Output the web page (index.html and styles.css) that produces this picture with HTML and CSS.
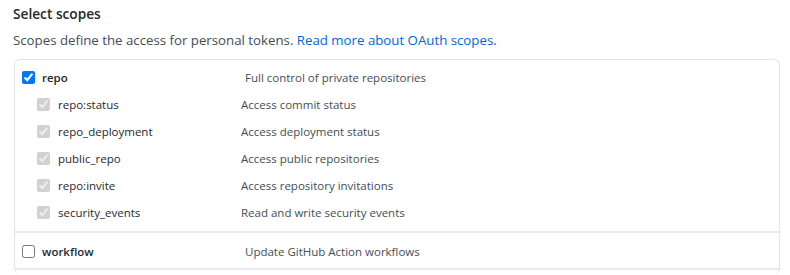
FILE: index.html
```html
<!DOCTYPE html>
<html>
<head>
<meta charset="utf-8">
<link rel="stylesheet" href="styles.css">
</head>
<body>
<div class="form-group">
  <h3 class="title">Select scopes</h3>
  <p class="note">Scopes define the access for personal tokens. <a href="#">Read more about OAuth scopes.</a></p>
  <div class="scopes">
    <div class="group">
      <div class="row main">
        <label class="name"><input type="checkbox" checked><span>repo</span></label>
        <span class="desc">Full control of private repositories</span>
      </div>
      <div class="row sub">
        <label class="name"><input type="checkbox" checked disabled><span>repo:status</span></label>
        <span class="desc">Access commit status</span>
      </div>
      <div class="row sub">
        <label class="name"><input type="checkbox" checked disabled><span>repo_deployment</span></label>
        <span class="desc">Access deployment status</span>
      </div>
      <div class="row sub">
        <label class="name"><input type="checkbox" checked disabled><span>public_repo</span></label>
        <span class="desc">Access public repositories</span>
      </div>
      <div class="row sub">
        <label class="name"><input type="checkbox" checked disabled><span>repo:invite</span></label>
        <span class="desc">Access repository invitations</span>
      </div>
      <div class="row sub">
        <label class="name"><input type="checkbox" checked disabled><span>security_events</span></label>
        <span class="desc">Read and write security events</span>
      </div>
    </div>
    <div class="group single">
      <div class="row main">
        <label class="name"><input type="checkbox"><span>workflow</span></label>
        <span class="desc">Update GitHub Action workflows</span>
      </div>
    </div>
    <div class="group rest"></div>
  </div>
</div>
</body>
</html>
```
FILE: styles.css
```css
html, body {
  margin: 0;
  padding: 0;
  background: #ffffff;
}
body {
  font-family: "Open Sans", "Noto Sans", sans-serif;
  font-size: 11.5px;
  color: #24292e;
  padding-left: 13px;
}
.title {
  margin: 0;
  padding-top: 4px;
  font-size: 13.7px;
  font-weight: 600;
  line-height: 20px;
  color: #24292e;
}
.note {
  margin: 6px 0 0;
  line-height: 20px;
  font-size: 13.25px;
  color: #444d56;
}
.note a {
  color: #0366d6;
  text-decoration: none;
}
.scopes {
  margin-top: 9px;
  margin-left: 1px;
  width: 766px;
  border: 1px solid #e1e4e8;
  border-radius: 6px;
  border-bottom: none;
  box-sizing: border-box;
}
.group {
  padding: 4px 0 5px;
  border-bottom: 2px solid #e8eaed;
  margin: 0 -2px 0 -1px;
}
.group.single {
  padding: 0;
  height: 37px;
  box-sizing: border-box;
}
.group.single .row {
  height: 36px;
}
.group.rest {
  padding: 0;
  height: 4px;
  border-bottom: none;
}
.row {
  display: grid;
  align-items: center;
  height: 27px;
}
.row.main {
  grid-template-columns: 223px 1fr;
  padding-left: 8px;
}
.row.sub {
  grid-template-columns: 204px 1fr;
  padding-left: 23px;
}
.name {
  display: flex;
  align-items: center;
  font-weight: 600;
}
.row.sub .name {
  font-weight: 400;
}
.name input {
  margin: 0 7px 0 0;
  width: 13px;
  height: 13px;
}
.row.sub .name input {
  margin-right: 8px;
}
.desc {
  color: #444d56;
}
```
